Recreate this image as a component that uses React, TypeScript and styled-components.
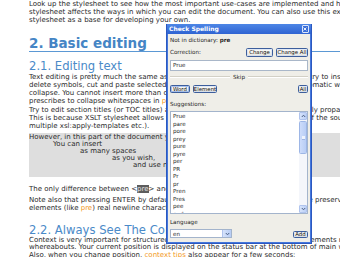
import React from 'react';
import styled, { createGlobalStyle } from 'styled-components';

const GlobalStyle = createGlobalStyle`
  html, body {
    margin: 0;
    padding: 0;
    background: #fff;
  }
  body {
    width: 340px;
    height: 257px;
    overflow: hidden;
  }
`;

const Page = styled.div`
  position: relative;
  width: 340px;
  height: 257px;
  overflow: hidden;
  background: #fff;
  font-family: 'DejaVu Sans', Verdana, sans-serif;
  color: #2a2a2a;
`;

const Doc = styled.div`
  display: flex;
  flex-direction: column;
  padding-left: 29px;
  width: 480px;
`;

const Para = styled.div<{ $gap?: number; $lh?: number }>`
  font-size: 7px;
  line-height: ${p => p.$lh ?? 8}px;
  margin-top: ${p => p.$gap ?? 0}px;
`;

const Line = styled.div`
  white-space: nowrap;
`;

const Title = styled.h1`
  margin: 11px 0 0;
  font-size: 13.5px;
  line-height: 16px;
  font-weight: bold;
  color: #4585c5;
  border-bottom: 1px solid #5b98d4;
`;

const SubTitle = styled.h2<{ $gap: number }>`
  margin: ${p => p.$gap}px 0 0;
  font-size: 11.6px;
  line-height: 14px;
  font-weight: normal;
  color: #4a8ac8;
  white-space: nowrap;
`;

const Tip = styled.span`
  color: #f39a1e;
`;

const Selected = styled.span`
  background: #5d5d5d;
  color: #e4e4e4;
`;

const PreBox = styled.div`
  margin-top: 3px;
  padding: 1px 0 8px;
  background: #dedede;
  font-size: 7px;
  line-height: 7px;
`;

const PreLine = styled.div<{ $indent: number }>`
  white-space: nowrap;
  padding-left: ${p => p.$indent}px;
`;

/* ---------- dialog ---------- */

const Dialog = styled.div`
  position: absolute;
  left: 166px;
  top: 24px;
  width: 146px;
  height: 220px;
  box-sizing: border-box;
  display: flex;
  flex-direction: column;
  background: #4477dc;
  border: 1px solid #2b58c0;
  border-top: none;
  font-family: 'DejaVu Sans', Tahoma, sans-serif;
  font-size: 5.6px;
  color: #1d1d1d;
`;

const TitleBar = styled.div`
  height: 9.5px;
  display: flex;
  align-items: center;
  justify-content: space-between;
  padding: 0 2px 0 2px;
  background: linear-gradient(#4d86e6, #2f63d2);
  color: #fff;
  font-weight: bold;
  font-size: 6px;
`;

const CloseBtn = styled.div`
  width: 5.5px;
  height: 5.5px;
  display: flex;
  align-items: center;
  justify-content: center;
  background: #3b6fd9;
  border: 0.5px solid #dbe6fb;
  border-radius: 1px;
`;

const Body = styled.div`
  flex: 1;
  display: flex;
  flex-direction: column;
  margin: 0 1px 1px;
  padding: 3px 2px 0 2px;
  background: #efeee8;
`;

const Row = styled.div<{ $top?: number; $h?: number; $align?: string }>`
  display: flex;
  align-items: ${p => p.$align ?? 'center'};
  justify-content: space-between;
  margin-top: ${p => p.$top ?? 0}px;
  height: ${p => p.$h ?? 7}px;
  white-space: nowrap;
`;

const ButtonGroup = styled.div`
  display: flex;
  gap: 3px;
`;

const Btn = styled.div<{ $w: number; $h?: number; $focus?: boolean }>`
  box-sizing: border-box;
  width: ${p => p.$w}px;
  height: ${p => p.$h ?? 8}px;
  display: flex;
  align-items: center;
  justify-content: center;
  border: 1px solid #3d5e9c;
  border-radius: 1.5px;
  background: linear-gradient(#fdfdfb, #e7e6df);
  box-shadow: ${p => (p.$focus ? 'inset 0 0 0 0.8px #8fb0ea' : 'inset 0 0 0 0.5px #c6d6f2')};
  font-size: 5.4px;
  color: #111;
`;

const Field = styled.div`
  margin-top: 3px;
  height: 11px;
  box-sizing: border-box;
  display: flex;
  align-items: center;
  padding-left: 2px;
  background: #fff;
  border: 1px solid #a9b7c9;
`;

const Separator = styled.div`
  display: flex;
  align-items: center;
  gap: 3px;
  margin-top: 2.5px;
  height: 7px;
  &::before,
  &::after {
    content: '';
    flex: 1;
    height: 0;
    border-top: 1px solid #d2d0c6;
    border-bottom: 1px solid #fff;
  }
`;

const ListBox = styled.div`
  margin-top: 4px;
  height: 103px;
  box-sizing: border-box;
  display: flex;
  background: #fff;
  border: 1px solid #a3b4cc;
`;

const Items = styled.div`
  flex: 1;
  padding: 1px 0 0 2px;
  overflow: hidden;
  line-height: 7.5px;
`;

const ScrollBar = styled.div`
  width: 8px;
  display: flex;
  flex-direction: column;
  background: #f4f6fb;
`;

const ScrollArrow = styled.div`
  height: 8px;
  box-sizing: border-box;
  display: flex;
  align-items: center;
  justify-content: center;
  background: linear-gradient(90deg, #d6e3fb, #bcd0f6);
  border: 0.5px solid #b0c4ee;
  border-radius: 1px;
`;

const Track = styled.div`
  flex: 1;
  padding-top: 1px;
`;

const Thumb = styled.div`
  height: 33px;
  box-sizing: border-box;
  display: flex;
  align-items: center;
  justify-content: center;
  background: linear-gradient(90deg, #cddcfb, #b8cdf5);
  border: 0.5px solid #9db6e6;
  border-radius: 1.5px;
`;

const Grip = styled.div`
  width: 3px;
  height: 4px;
  background: repeating-linear-gradient(#eef3fd 0 0.6px, #9fb6e4 0.6px 1.2px);
`;

const Select = styled.div`
  width: 62px;
  height: 9px;
  box-sizing: border-box;
  display: flex;
  align-items: center;
  justify-content: space-between;
  padding-left: 2px;
  background: #fff;
  border: 1px solid #a3b4cc;
`;

const DropBtn = styled.div`
  width: 8px;
  height: 7px;
  display: flex;
  align-items: center;
  justify-content: center;
  background: linear-gradient(90deg, #d6e3fb, #b7ccf4);
  border-left: 0.5px solid #b0c4ee;
`;

const Arrow = ({ up }: { up?: boolean }) => (
  <svg width="5" height="4" viewBox="0 0 5 4">
    <path
      d={up ? 'M0.8 3 L2.5 1.2 L4.2 3' : 'M0.8 1 L2.5 2.8 L4.2 1'}
      fill="none"
      stroke="#4d6185"
      strokeWidth="1"
    />
  </svg>
);

const suggestions = ['Prue', 'pare', 'pore', 'prey', 'pure', 'pyre', 'per', 'PR', 'Pr', 'pr', 'Pren', 'Pres', 'pee', 'pud'];

export default function App() {
  return (
    <Page>
      <GlobalStyle />
      <Doc>
        <Para>
          <Line>Look up the stylesheet to see how the most important use-cases are implemented and how the</Line>
          <Line>stylesheet affects the ways in which you can edit the document. You can also use this example</Line>
          <Line>stylesheet as a base for developing your own.</Line>
        </Para>

        <Title>2. Basic editing</Title>
        <SubTitle $gap={7}>2.1. Editing text</SubTitle>

        <Para>
          <Line>Text editing is pretty much the same as in any other simple text editor. You can try to insert and delete</Line>
          <Line>delete symbols, cut and paste selected text, etc. Note that whitespaces are automatic when</Line>
          <Line>collapse. You cannot insert more than one space in a row since the stylesheet</Line>
          <Line>prescribes to collapse whitespaces in <Tip>pre</Tip> elements.</Line>
        </Para>

        <Para $gap={1}>
          <Line>Try to edit section titles (or TOC titles) and see how the changes are automatically propagated.</Line>
          <Line>This is because XSLT stylesheet allows you to edit the nodes in multiple places of the source</Line>
          <Line>multiple xsl:apply-templates etc.).</Line>
        </Para>

        <PreBox>
          <PreLine $indent={0}>However, in this part of the document you can insert whitespace freely.</PreLine>
          <PreLine $indent={24}>You can insert</PreLine>
          <PreLine $indent={51}>as many spaces</PreLine>
          <PreLine $indent={83}>as you wish,</PreLine>
          <PreLine $indent={104}>and use newlines.</PreLine>
        </PreBox>

        <Para $gap={8}>
          <Line>The only difference between &lt;<Selected>pre</Selected>&gt; and &lt;p&gt; is whitespace handling.</Line>
        </Para>

        <Para $gap={2.5}>
          <Line>Note also that pressing ENTER by default splits the paragraph, but in whitespace preserving</Line>
          <Line>elements (like <Tip>pre</Tip>) real newline characters are inserted.</Line>
        </Para>

        <SubTitle $gap={11}>2.2. Always See The Context</SubTitle>

        <Para $lh={7.5}>
          <Line>Context is very important for structured documents, so you should know your elements regarding</Line>
          <Line>whereabouts. Your current position is displayed on the status bar at the bottom of main window.</Line>
          <Line>Also, when you change position, <Tip>context tips</Tip> also appear for a few seconds:</Line>
        </Para>
      </Doc>

      <Dialog>
        <TitleBar>
          <span>Check Spelling</span>
          <CloseBtn>
            <svg width="4" height="4" viewBox="0 0 4 4">
              <path d="M0.6 0.6 L3.4 3.4 M3.4 0.6 L0.6 3.4" stroke="#fff" strokeWidth="0.9" />
            </svg>
          </CloseBtn>
        </TitleBar>
        <Body>
          <Row>
            <span>
              Not in dictionary: <b>pre</b>
            </span>
          </Row>
          <Row $top={4} $h={9}>
            <span>Correction:</span>
            <ButtonGroup>
              <Btn $w={27} $h={9}>Change</Btn>
              <Btn $w={32} $h={9}>Change All</Btn>
            </ButtonGroup>
          </Row>
          <Field>Prue</Field>
          <Separator>Skip</Separator>
          <Row $top={5} $h={8}>
            <ButtonGroup>
              <Btn $w={20} $focus>Word</Btn>
              <Btn $w={24}>Element</Btn>
            </ButtonGroup>
            <Btn $w={10}>All</Btn>
          </Row>
          <Row $top={7}>
            <span>Suggestions:</span>
          </Row>
          <ListBox>
            <Items>
              {suggestions.map(s => (
                <div key={s}>{s}</div>
              ))}
            </Items>
            <ScrollBar>
              <ScrollArrow>
                <Arrow up />
              </ScrollArrow>
              <Track>
                <Thumb>
                  <Grip />
                </Thumb>
              </Track>
              <ScrollArrow>
                <Arrow />
              </ScrollArrow>
            </ScrollBar>
          </ListBox>
          <Row $top={4}>
            <span>Language</span>
          </Row>
          <Row $top={4} $h={9} $align="flex-end">
            <Select>
              <span>en</span>
              <DropBtn>
                <Arrow />
              </DropBtn>
            </Select>
            <Btn $w={15} $h={7.5}>Add</Btn>
          </Row>
        </Body>
      </Dialog>
    </Page>
  );
}
